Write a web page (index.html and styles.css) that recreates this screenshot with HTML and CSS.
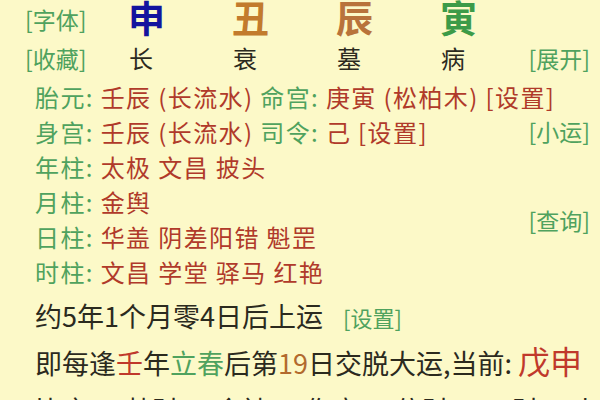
FILE: index.html
```html
<!DOCTYPE html>
<html lang="zh-CN">
<head>
    <meta charset="UTF-8">
    <title>排盘</title>
    <link rel="stylesheet" href="styles.css">
</head>
<body>
<div class="board">
    <!-- 四柱 -->
    <div class="pillars">
        <div class="link">[字体]</div>
        <div class="stem stem-1">申</div>
        <div class="stem stem-2">丑</div>
        <div class="stem stem-3">辰</div>
        <div class="stem stem-4">寅</div>
        <div></div>
        <div class="link">[收藏]</div>
        <div class="phase">长</div>
        <div class="phase">衰</div>
        <div class="phase">墓</div>
        <div class="phase">病</div>
        <div class="link">[展开]</div>
    </div>

    <!-- 神煞 -->
    <div class="info">
        <div class="rows">
            <div class="row"><span class="k">胎元:</span> <span class="v">壬辰 (长流水)</span> <span class="k">命宫:</span> <span class="v">庚寅 (松柏木) [设置]</span></div>
            <div class="row"><span class="k">身宫:</span> <span class="v">壬辰 (长流水)</span> <span class="k">司令:</span> <span class="v">己 [设置]</span></div>
            <div class="row"><span class="k">年柱:</span> <span class="v">太极 文昌 披头</span></div>
            <div class="row"><span class="k">月柱:</span> <span class="v">金舆</span></div>
            <div class="row"><span class="k">日柱:</span> <span class="v">华盖 阴差阳错 魁罡</span></div>
            <div class="row"><span class="k">时柱:</span> <span class="v">文昌 学堂 驿马 红艳</span></div>
        </div>
        <div class="side">
            <div class="link">[小运]</div>
            <div class="link">[查询]</div>
        </div>
    </div>

    <!-- 大运 -->
    <div class="luck">
        <div class="line">约5年1个月零4日后上运<span class="link small">[设置]</span></div>
        <div class="line">即每逢<span class="red">壬</span>年<span class="green">立春</span>后第<span class="brown">19</span>日交脱大运,当前: <span class="red big">戊申</span></div>
        <div class="line gods">
            <span>比肩</span><span>劫财</span><span>食神</span><span>伤官</span><span>偏财</span><span>正财</span><span>七杀</span>
        </div>
    </div>
</div>
</body>
</html>
```

FILE: styles.css
```css
html,body{
    margin: 0;
    padding: 0;
    height: 100%;
    overflow: hidden;
}
body{
    background-color: #fcf9c8;
    font-family: "Noto Sans CJK SC", "Noto Sans", sans-serif;
    color: #2b2a1e;
}
.board{
    padding: 0 10px 0 25px;
}
.link{
    color: #4fa25e;
    font-size: 23px;
    white-space: nowrap;
}
.pillars{
    display: grid;
    grid-template-columns: 103px repeat(3, 104px) 1fr auto;
    grid-template-rows: 37px 41px;
    align-items: center;
}
.stem{
    font-size: 37px;
    font-weight: bold;
    line-height: 1;
    margin-top: -3px;
}
.stem-1{ color: #13139e; }
.stem-2{ color: #c27b2d; }
.stem-3{ color: #b8733b; }
.stem-4{ color: #3c9b48; }
.phase{
    font-size: 24px;
    padding-left: 1px;
}
.info{
    display: grid;
    grid-template-columns: minmax(0, 1fr) auto;
    padding-left: 10px;
    padding-top: 1px;
}
.row{
    font-size: 24px;
    letter-spacing: 1.4px;
    line-height: 35px;
    white-space: nowrap;
}
.k{ color: #4fa25e; }
.v{ color: #b03a2a; }
.side{
    display: flex;
    flex-direction: column;
    gap: 54px;
    padding-top: 35px;
}
.side .link{
    line-height: 35px;
}
.luck{
    padding-left: 10px;
    padding-top: 5px;
}
.line{
    font-size: 27px;
    line-height: 43px;
    white-space: nowrap;
}
.small{
    font-size: 22px;
    margin-left: 20px;
}
.red{ color: #c0392b; }
.green{ color: #4fa25e; }
.brown{ color: #b26a2e; }
.big{ font-size: 32px; }
.gods{
    display: flex;
    gap: 36px;
    margin-top: 4px;
}
```
